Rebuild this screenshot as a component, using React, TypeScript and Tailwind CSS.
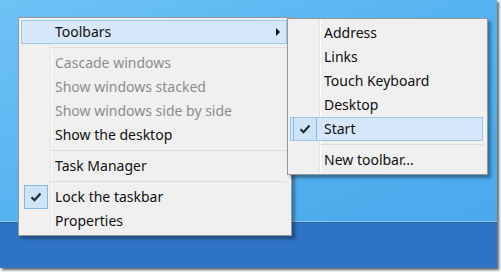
import React from "react";

const font = { fontFamily: '"Noto Sans", "Open Sans", sans-serif' };

function Check() {
  return (
    <svg width="12" height="10" viewBox="0 0 12 10">
      <path d="M1.5 5.2 L4.5 8.2 L10.5 1.5" fill="none" stroke="#1f2a36" strokeWidth="2.2" />
    </svg>
  );
}

function Row({
  label,
  disabled,
  highlight,
  checked,
  arrow,
}: {
  label: string;
  disabled?: boolean;
  highlight?: boolean;
  checked?: boolean;
  arrow?: boolean;
}) {
  return (
    <div
      className={`relative flex h-[24px] items-center mr-[2px] ${
        highlight ? "bg-[#d5e7f8] outline outline-1 -outline-offset-1 outline-[#9ec7ec]" : ""
      }`}
    >
      <div className="flex h-full w-[29px] items-center justify-center">
        {checked && (
          <div className="flex h-[24px] w-[24px] items-center justify-center border border-[#86b8e6] bg-[#cde3f6]">
            <Check />
          </div>
        )}
      </div>
      <span
        className={`ml-[5px] text-[14px] leading-none ${disabled ? "text-[#8d8d8d]" : "text-[#111]"}`}
      >
        {label}
      </span>
      {arrow && (
        <div className="absolute right-[7px] top-[8px] h-0 w-0 border-y-[4px] border-l-[4px] border-y-transparent border-l-[#111]" />
      )}
    </div>
  );
}

function Sep() {
  return (
    <div className="py-[3px] pl-[29px] mr-[2px]">
      <div className="h-px bg-[#dcdcdc]" />
    </div>
  );
}

export default function App() {
  return (
    <div className="relative h-[272px] w-[501px] overflow-hidden bg-[#f2f2f2]" style={font}>
      <div className="relative flex h-[268px] w-[497px] flex-col shadow-[2px_2px_2px_rgba(0,0,0,0.55)]">
        <div className="h-[221px] bg-gradient-to-br from-[#6dc3f6] via-[#55b3f0] to-[#4aa8ec]" />
        <div className="h-px bg-[#8cc6f2]" />
        <div className="flex-1 border-t border-[#2a63a8] bg-[#2f74c4]" />
      </div>

      {/* main context menu */}
      <div className="absolute left-[18px] top-[17px] w-[274px] border border-[#979797] bg-[#f0f0f0] p-[2px] shadow-[3px_3px_3px_rgba(0,0,0,0.35)]">
        <div className="absolute bottom-[2px] left-[31px] top-[2px] w-px bg-[#e2e2e2]" />
        <div className="absolute bottom-[2px] left-[32px] top-[2px] w-px bg-white" />
        <div className="relative">
          <Row label="Toolbars" highlight arrow />
          <Sep />
          <Row label="Cascade windows" disabled />
          <Row label="Show windows stacked" disabled />
          <Row label="Show windows side by side" disabled />
          <Row label="Show the desktop" />
          <Sep />
          <Row label="Task Manager" />
          <Sep />
          <Row label="Lock the taskbar" checked />
          <Row label="Properties" />
        </div>
      </div>

      {/* submenu */}
      <div className="absolute left-[287px] top-[18px] w-[201px] border border-[#979797] bg-[#f0f0f0] p-[2px] shadow-[3px_3px_3px_rgba(0,0,0,0.35)]">
        <div className="absolute bottom-[2px] left-[31px] top-[2px] w-px bg-[#e2e2e2]" />
        <div className="absolute bottom-[2px] left-[32px] top-[2px] w-px bg-white" />
        <div className="relative">
          <Row label="Address" />
          <Row label="Links" />
          <Row label="Touch Keyboard" />
          <Row label="Desktop" />
          <Row label="Start" highlight checked />
          <Sep />
          <Row label="New toolbar..." />
        </div>
      </div>
    </div>
  );
}
